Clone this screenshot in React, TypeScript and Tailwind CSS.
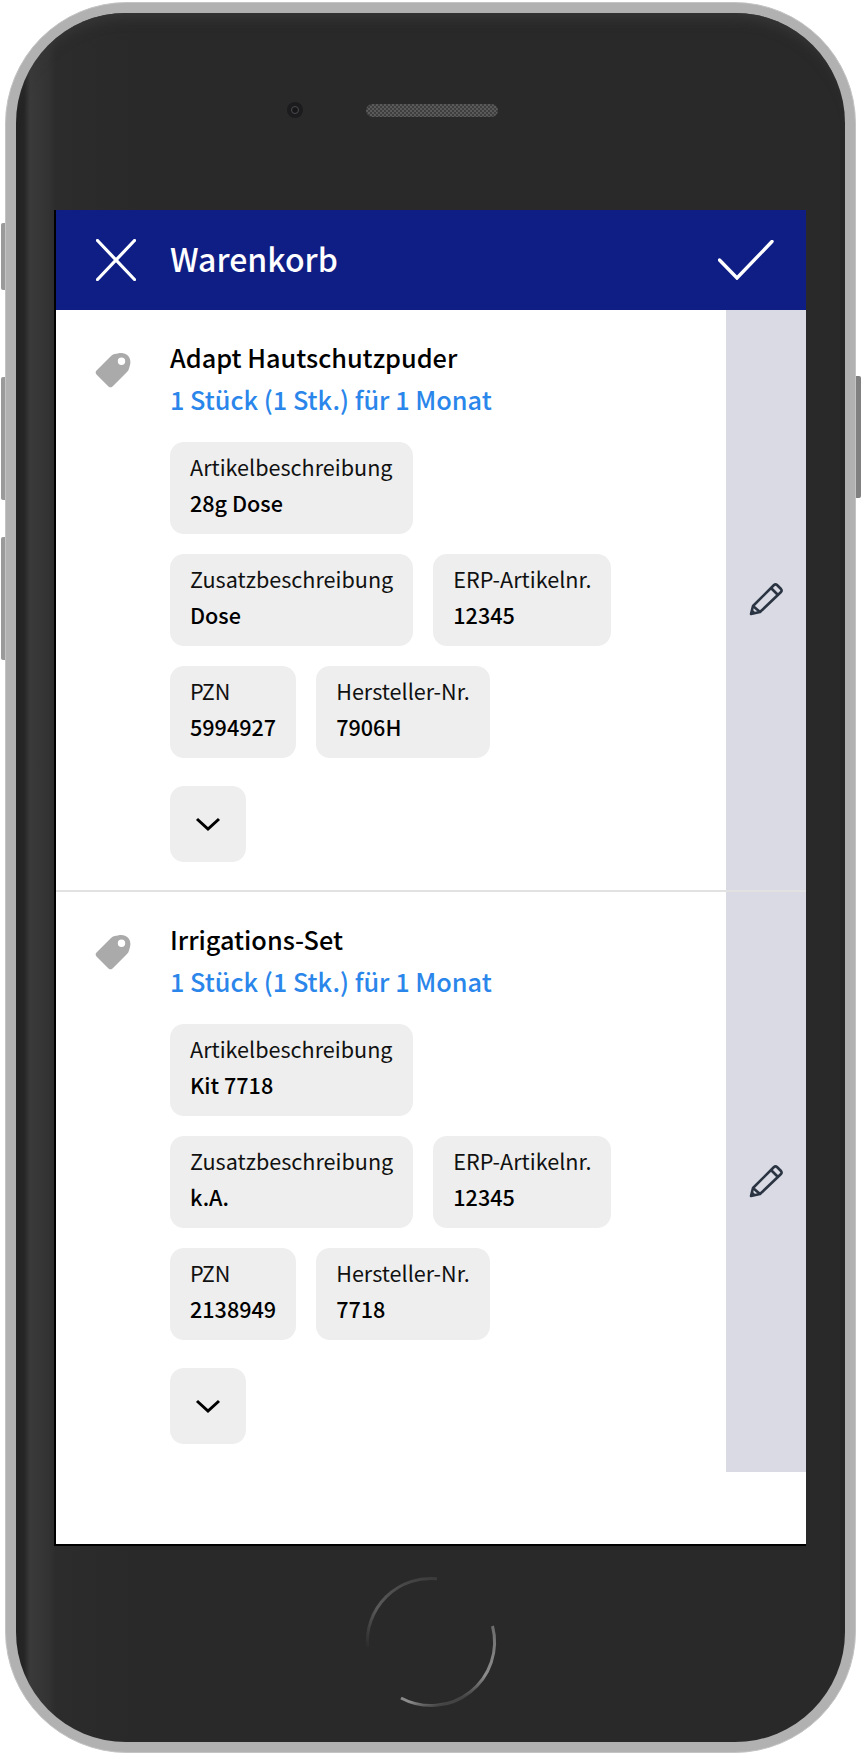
import React from "react";

const font = { fontFamily: '"Noto Sans CJK SC", "Noto Sans", sans-serif' };

function Tile({ label, value }: { label: string; value: string }) {
  return (
    <div className="h-[92px] rounded-[14px] bg-[#eeeeee] px-5 pt-[7px]">
      <div className="whitespace-nowrap text-[21.6px] leading-[36px] text-[#111111]">{label}</div>
      <div className="whitespace-nowrap text-[21.6px] leading-[36px] font-medium text-black">{value}</div>
    </div>
  );
}

function Item({ name, rows }: { name: string; rows: [string, string][][] }) {
  return (
    <div className="flex h-[580px]">
      <div className="w-[114px] shrink-0 pl-[39px] pt-[42px]">
        <svg width="36" height="36" viewBox="0 0 36 36">
          <path fill="#aaaaaa" fillRule="evenodd" d="M23 1.5 C31 -0.5 37 5 35 13 L34 16.5 Q33.5 18.5 32 20 L17.5 34.5 Q15.5 36.2 13.5 34.5 L1.5 22.5 Q-0.2 20.5 1.5 18.5 L16 4 Q17.5 2.5 19.5 2 Z M26.5 5.5 A3.7 3.7 0 1 0 26.5 12.9 A3.7 3.7 0 1 0 26.5 5.5 Z" />
        </svg>
      </div>
      <div className="flex-1 pt-[26px]">
        <div className="text-[25.3px] leading-[42px] font-medium text-black">{name}</div>
        <div className="text-[25.3px] leading-[42px] font-medium text-[#2a86ea]">1 Stück (1 Stk.) für 1 Monat</div>
        <div className="mt-[22px] flex flex-col gap-5">
          {rows.map((r, i) => (
            <div key={i} className="flex gap-5">
              {r.map(([l, v]) => (
                <Tile key={l} label={l} value={v} />
              ))}
            </div>
          ))}
        </div>
        <div className="mt-7 flex h-[76px] w-[76px] items-center justify-center rounded-[14px] bg-[#eeeeee]">
          <svg width="26" height="16" viewBox="0 0 26 16" fill="none" stroke="#000000" strokeWidth="3">
            <path d="M2 3 L13 13 L24 3" />
          </svg>
        </div>
      </div>
      <div className="flex w-[80px] shrink-0 items-center justify-center bg-[#d9dae3] pb-[2px]">
        <svg width="34" height="34" viewBox="0 0 34 34" fill="none" stroke="#2b3442" strokeWidth="2.6" strokeLinejoin="round">
          <path d="M2 32 L4 24 L25 3 Q26.5 1.6 28 3 L32 7 Q33.2 8.5 32 10 L11 30 Z" />
          <path d="M22 6 L29 13" />
          <path d="M4 24 L11 30" />
          <path fill="#2b3442" stroke="none" d="M1.5 32.5 L3 27 L7 31 Z" />
        </svg>
      </div>
    </div>
  );
}

export default function App() {
  return (
    <div className="flex h-[1754px] w-[862px] overflow-hidden bg-white pl-[1px]" style={font}>
      {/* left side buttons */}
      <div className="flex w-[4px] shrink-0 flex-col pt-[223px]">
        <div className="h-[67px] w-[4px] rounded-l-[2px] bg-[#9a9a9a]" />
        <div className="mt-[87px] h-[123px] w-[4px] rounded-l-[2px] bg-[#9a9a9a]" />
        <div className="mt-[37px] h-[123px] w-[4px] rounded-l-[2px] bg-[#9a9a9a]" />
      </div>

      {/* device */}
      <div className="mt-[2px] h-[1751px] w-[851px] shrink-0 rounded-[122px] border border-[#c4c4c4] bg-[#b1b1b1] p-[10px]">
        <div className="flex h-full w-full flex-col overflow-hidden rounded-[110px] bg-[linear-gradient(90deg,#232323_0,#252525_8px,#3a3a3a_14px,#333333_32px,#2c2c2c_40px,#292929_120px)] shadow-[inset_0_16px_12px_-10px_#363636]">
          {/* camera + speaker */}
          <div className="flex h-[197px] shrink-0 items-center gap-[63px] pb-[3px] pl-[271px]">
            <div className="flex h-[16px] w-[16px] items-center justify-center rounded-full bg-[#1c1c1e]">
              <div className="h-[8px] w-[8px] rounded-full border border-[#4c4c50] bg-[#17171a]" />
            </div>
            <div className="h-[13px] w-[132px] rounded-full bg-[repeating-conic-gradient(#5a5a5a_0_25%,#3e3e3e_0_50%)] bg-[length:4px_4px]" />
          </div>

          {/* screen */}
          <div className="ml-[40px] h-[1336px] w-[750px] shrink-0 border-b-[2px] border-black bg-white shadow-[-2px_0_0_#000000]">
            <div className="flex h-[100px] items-center bg-[#0f1e85] pl-[40px] pr-[32px]">
              <svg width="40" height="42" viewBox="0 0 40 42" fill="none" stroke="#ffffff" strokeWidth="3.2" strokeLinecap="round">
                <path d="M1.5 1.5 L38.5 40.5" />
                <path d="M38.5 1.5 L1.5 40.5" />
              </svg>
              <div className="ml-[34px] flex-1 pb-[4px] text-[32px] font-medium text-white">Warenkorb</div>
              <svg width="56" height="40" viewBox="0 0 56 40" fill="none" stroke="#ffffff" strokeWidth="3.4" strokeLinecap="round">
                <path d="M1.5 20 L19 38 L54 1.5" />
              </svg>
            </div>
            <Item
              name="Adapt Hautschutzpuder"
              rows={[
                [["Artikelbeschreibung", "28g Dose"]],
                [["Zusatzbeschreibung", "Dose"], ["ERP-Artikelnr.", "12345"]],
                [["PZN", "5994927"], ["Hersteller-Nr.", "7906H"]],
              ]}
            />
            <div className="h-[2px] bg-[#e2e2e2]" />
            <Item
              name="Irrigations-Set"
              rows={[
                [["Artikelbeschreibung", "Kit 7718"]],
                [["Zusatzbeschreibung", "k.A."], ["ERP-Artikelnr.", "12345"]],
                [["PZN", "2138949"], ["Hersteller-Nr.", "7718"]],
              ]}
            />
          </div>

          {/* home button */}
          <div className="flex justify-center pt-[26px]">
            <svg width="140" height="140" viewBox="0 0 140 140" fill="none">
              <defs>
                <linearGradient id="ring" x1="0" y1="0" x2="0.4" y2="1">
                  <stop offset="0" stopColor="#555555" />
                  <stop offset="0.5" stopColor="#777777" />
                  <stop offset="0.85" stopColor="#8c8c8c" />
                  <stop offset="1" stopColor="#444444" />
                </linearGradient>
                <linearGradient id="ringTop" x1="0" y1="1" x2="1" y2="0">
                  <stop offset="0" stopColor="#2c2c2c" />
                  <stop offset="0.35" stopColor="#5a5a5a" />
                  <stop offset="1" stopColor="#3a3a3a" />
                </linearGradient>
              </defs>
              <path d="M6.5 75 A63.5 63.5 0 0 1 76 6.8" stroke="url(#ringTop)" strokeWidth="3" />
              <path d="M131.5 54 A63.5 63.5 0 0 1 40 126" stroke="url(#ring)" strokeWidth="3" />
            </svg>
          </div>
        </div>
      </div>

      {/* right side button */}
      <div className="flex flex-col pt-[376px]">
        <div className="h-[122px] w-[5px] rounded-r-[2px] bg-[#808080]" />
      </div>
    </div>
  );
}
